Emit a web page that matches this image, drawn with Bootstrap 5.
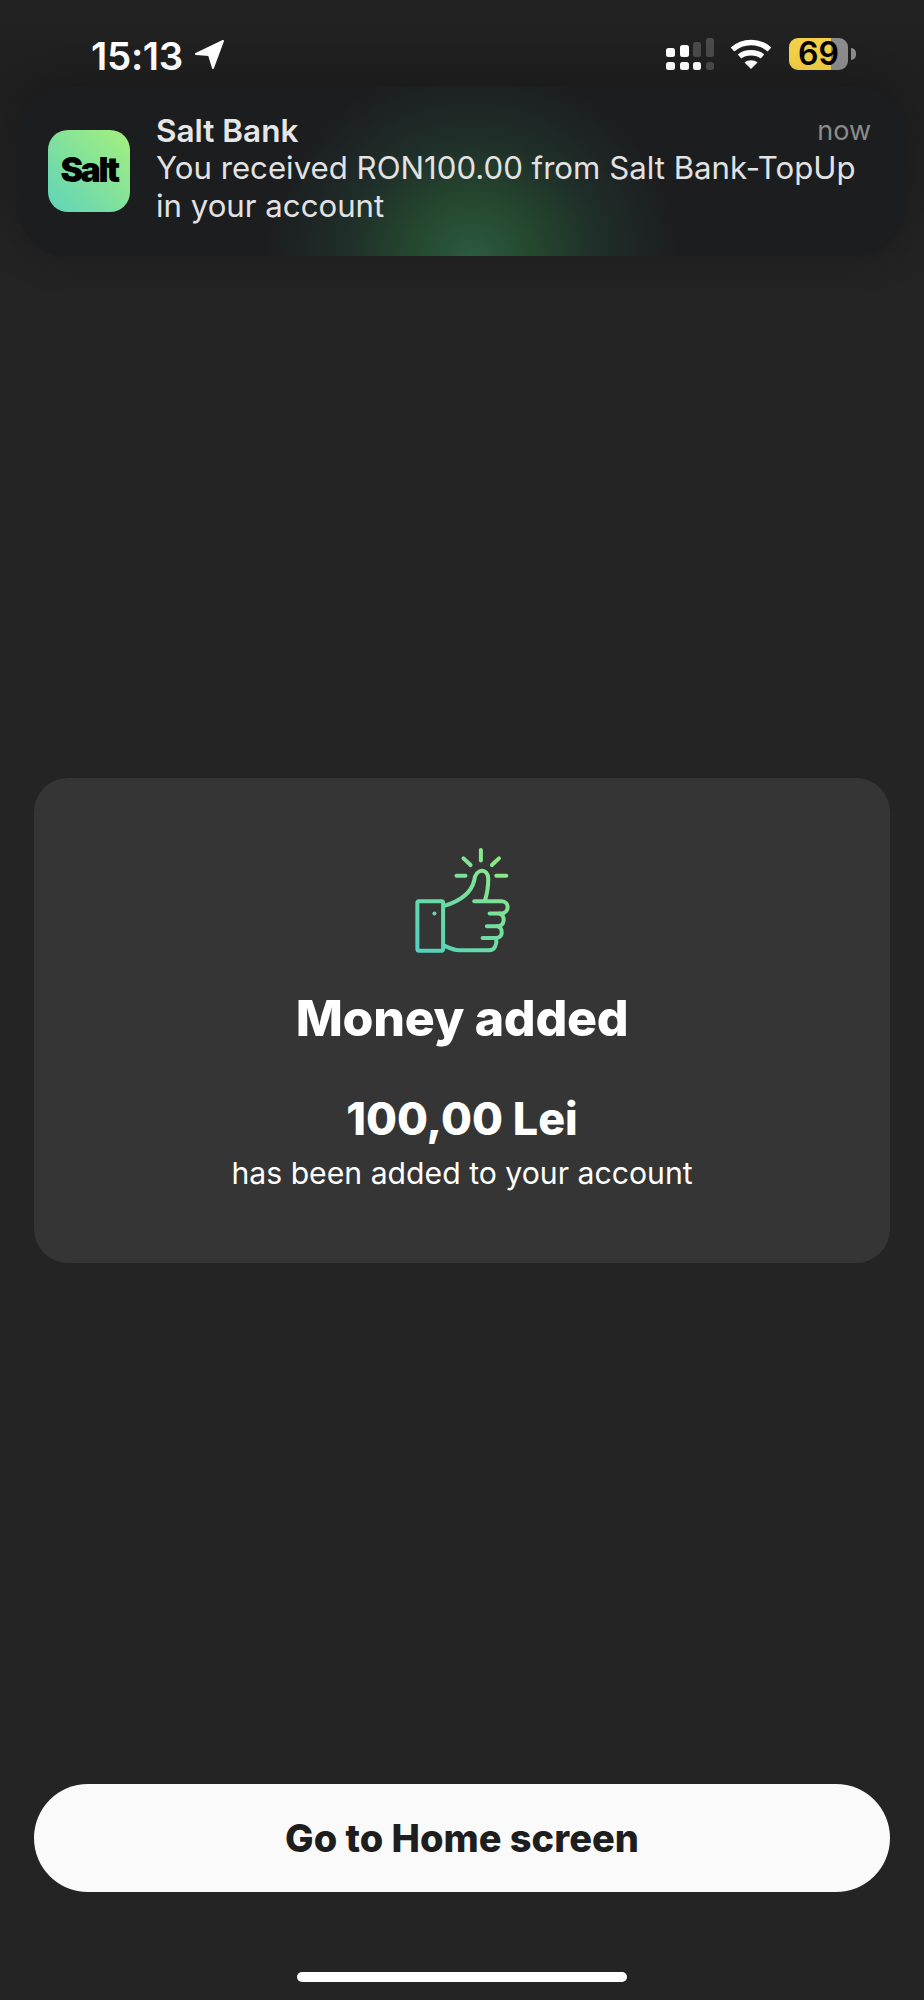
<!DOCTYPE html>
<html lang="en">
<head>
  <meta charset="UTF-8" />
  <title>Salt Bank</title>
  <meta name="viewport" content="width=device-width, initial-scale=1"/>
  <link href="https://cdn.jsdelivr.net/npm/bootstrap@5.3.0/dist/css/bootstrap.min.css" rel="stylesheet"/>
  <style>
    body { background:#242424; font-family:Inter,"Liberation Sans",sans-serif; color:#fff; height:2000px; overflow:hidden; }
    .phone { height:2000px; padding:0 34px; background:linear-gradient(180deg,#222 0,#1f1f1f 80px,#242424 300px); }
    .status-row { height:86px; padding:38px 0 0 57px; margin:0 34px 0 0; }
    .clock { font-size:38.500px; font-weight:600; line-height:36px; letter-spacing:-.3px; margin-right:11px; }
    .signal-icon { margin-right:16px; }
    .wifi-icon { margin-right:17px; }
    .batt { width:59px; height:32px; border-radius:9px; background:linear-gradient(90deg,#f3d047 71%,#8c8c8c 71%); color:#000; font-size:32px; font-weight:600; line-height:32px; text-align:center; }
    .batt-nub { width:5px; height:12px; margin-left:3px; border-radius:0 5px 5px 0; background:#8c8c8c; }
    .push { margin:0 -14px; height:170px; padding:27px 33px 0 28px; border-radius:46px; box-shadow:0 0 40px rgba(0,0,0,.22);
      background:radial-gradient(ellipse 205px 190px at 452px 100%,#2b5a40 0,#25492f 28%,#1f2e29 62%,rgba(28,30,31,0) 100%),#1c1d1f; }
    .app-tile { width:82px; height:82px; margin-top:17px; margin-right:26px; border-radius:20px; background:linear-gradient(45deg,#5fd3bb,#a5f07c); color:#000; font-size:34px; font-weight:900; letter-spacing:-2.500px; line-height:80px; text-align:center; }
    .push-title { font-size:31.500px; font-weight:600; color:#e6e6e6; line-height:36px; }
    .push-now { font-size:27px; color:#8b8b8b; line-height:36px; }
    .push-msg { font-size:31.200px; color:#e2e2e2; line-height:38px; white-space:nowrap; }
    .done-card { margin-top:522px; height:485px; padding-top:68px; background:#353535; border:0; border-radius:34px; }
    .done-title { font-size:50px; font-weight:800; letter-spacing:-.3px; line-height:56px; margin:37px 0 0; }
    .done-amount { font-size:44.800px; font-weight:800; line-height:54px; margin-top:46px; }
    .done-note { font-size:30.200px; line-height:38px; margin-top:8px; }
    .home-btn { height:108px; margin-top:521px; background:#fafafa; border:0; color:#1e1e1e; font-size:38px; font-weight:800; }
    .home-bar { width:330px; height:10px; margin:80px auto 0; border-radius:5px; background:#fff; }
  </style>
</head>
<body>
<div class="phone d-flex flex-column">
  <div class="status-row d-flex align-items-start">
    <span class="clock">15:13</span>
    <svg width="32" height="32" viewBox="0 0 32 32"><path d="M2 16 29 3 19 30 15 17Z" fill="#fff" stroke="#fff" stroke-width="2" stroke-linejoin="round"/></svg>
    <div class="ms-auto d-flex align-items-center">
      <svg class="signal-icon" width="48" height="32" viewBox="0 0 48 32">
        <rect x="0" y="10" width="9" height="9" rx="2.5" fill="#fff"/><rect x="14" y="7" width="9" height="12" rx="2.5" fill="#fff"/>
        <rect x="27" y="4" width="8" height="15" rx="2.5" fill="#4a4a4a"/><rect x="40" y="0" width="8" height="19" rx="2.5" fill="#4a4a4a"/>
        <rect x="0" y="24" width="9" height="8" rx="2.5" fill="#fff"/><rect x="14" y="24" width="9" height="8" rx="2.5" fill="#fff"/>
        <rect x="27" y="24" width="8" height="8" rx="2.5" fill="#fff"/><rect x="40" y="24" width="8" height="8" rx="2.5" fill="#4a4a4a"/>
      </svg>
      <svg class="wifi-icon" width="42" height="30" viewBox="0 0 42 30" fill="none" stroke="#fff" stroke-width="5.500">
        <path d="M2.500 10.500C13 1 29 1 39.500 10.500"/><path d="M9.500 17.500C15.500 12.500 26.500 12.500 32.500 17.500"/>
        <path d="M21 30 14.500 23.500C18 20.500 24 20.500 27.500 23.500Z" fill="#fff" stroke="none"/>
      </svg>
      <div class="batt">69</div>
      <div class="batt-nub"></div>
    </div>
  </div>

  <div class="push d-flex">
    <div class="app-tile flex-shrink-0">Salt</div>
    <div class="flex-grow-1">
      <div class="d-flex justify-content-between">
        <span class="push-title">Salt Bank</span>
        <span class="push-now">now</span>
      </div>
      <div class="push-msg">You received RON100.00 from Salt Bank-TopUp<br>in your account</div>
    </div>
  </div>

  <div class="card done-card text-center align-items-center">
    <svg width="97" height="107" viewBox="70 45 290 320" fill="none" stroke="url(#thumbGrad)" stroke-width="12" stroke-linecap="round" stroke-linejoin="round">
      <defs>
        <linearGradient id="thumbGrad" gradientUnits="userSpaceOnUse" x1="90" y1="350" x2="340" y2="90">
          <stop stop-color="#52d2bd"/><stop offset="1" stop-color="#8fea84"/>
        </linearGradient>
      </defs>
      <path d="M270 57V88M218 82 239 102M324 82 303 102M197 134H224M316 134H346"/>
      <rect x="80" y="210" width="77" height="148" rx="5"/>
      <path d="M131 247h.1"/>
      <path d="M160 224C200 212 240 190 250 148C254 110 292 110 292 143C292 170 288 190 282 208"/>
      <path d="M250 210H332C356 210 356 245 332 247H296"/>
      <path d="M326 247C344 254 342 285 320 285H288"/>
      <path d="M320 285C338 292 336 320 316 320H275"/>
      <path d="M316 320C318 340 312 357 295 357H205C190 357 175 350 160 343"/>
    </svg>
    <h1 class="done-title">Money added</h1>
    <div class="done-amount">100,00 Lei</div>
    <div class="done-note">has been added to your account</div>
  </div>

  <button type="button" class="btn home-btn rounded-pill w-100 flex-shrink-0">Go to Home screen</button>
  <div class="home-bar"></div>
</div>
<script src="https://cdn.jsdelivr.net/npm/bootstrap@5.3.0/dist/js/bootstrap.bundle.min.js"></script>
</body>
</html>
